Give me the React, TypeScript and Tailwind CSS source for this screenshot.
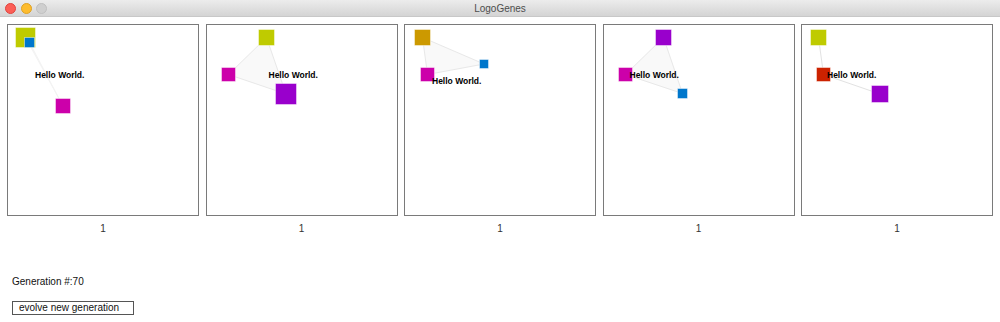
type Node = { x: number; y: number; s: number; c: string };

type Logo = {
  nodes: Node[];
  shape: 'polygon' | 'polyline';
  edge: string;
  text: { x: number; y: number };
};

// colours of the genes
const YELLOW = '#bfcb00';
const BLUE = '#0077cc';
const MAGENTA = '#cc00aa';
const PURPLE = '#9900cc';
const GOLD = '#cc9900';
const RED = '#cc2200';

// positions are measured from the outer corner of each panel
const logos: Logo[] = [
  {
    nodes: [
      { x: 8, y: 3, s: 21, c: YELLOW },
      { x: 17, y: 13, s: 11, c: BLUE },
      { x: 48, y: 74, s: 16, c: MAGENTA },
    ],
    shape: 'polygon',
    edge: '#f3f3f3',
    text: { x: 28, y: 51 },
  },
  {
    nodes: [
      { x: 52, y: 5, s: 17, c: YELLOW },
      { x: 15, y: 43, s: 15, c: MAGENTA },
      { x: 69, y: 59, s: 22, c: PURPLE },
    ],
    shape: 'polygon',
    edge: '#e8e8e8',
    text: { x: 63, y: 51 },
  },
  {
    nodes: [
      { x: 10, y: 5, s: 17, c: GOLD },
      { x: 75, y: 35, s: 10, c: BLUE },
      { x: 16, y: 43, s: 15, c: MAGENTA },
    ],
    shape: 'polygon',
    edge: '#e8e8e8',
    text: { x: 28, y: 57 },
  },
  {
    nodes: [
      { x: 52, y: 5, s: 17, c: PURPLE },
      { x: 15, y: 43, s: 15, c: MAGENTA },
      { x: 74, y: 64, s: 11, c: BLUE },
    ],
    shape: 'polygon',
    edge: '#e8e8e8',
    text: { x: 27, y: 51 },
  },
  {
    nodes: [
      { x: 9, y: 5, s: 17, c: YELLOW },
      { x: 15, y: 43, s: 15, c: RED },
      { x: 70, y: 61, s: 18, c: PURPLE },
    ],
    shape: 'polyline',
    edge: '#e2e2e2',
    text: { x: 26, y: 51 },
  },
];

function LogoPanel({ logo }: { logo: Logo }) {
  const points = logo.nodes.map((n) => `${n.x + n.s / 2},${n.y + n.s / 2}`).join(' ');
  return (
    <div className="relative w-[192px] h-[192px] border border-[#7a7a7a] bg-white overflow-hidden">
      <svg className="absolute -left-px -top-px" width={192} height={192}>
        {logo.shape === 'polygon' ? (
          <polygon points={points} fill="#f9f9f9" stroke={logo.edge} strokeWidth={1} />
        ) : (
          <polyline points={points} fill="none" stroke={logo.edge} strokeWidth={1} />
        )}
        {logo.nodes.map((n, i) => (
          <rect
            key={i}
            x={n.x + 0.5}
            y={n.y + 0.5}
            width={n.s - 1}
            height={n.s - 1}
            fill={n.c}
            stroke="rgba(255,255,255,0.45)"
            strokeWidth={1}
          />
        ))}
      </svg>
      <span
        className="absolute whitespace-nowrap text-[8.5px] leading-[10px] font-bold text-black"
        style={{ left: logo.text.x - 1, top: logo.text.y - 6 }}
      >
        Hello World.
      </span>
    </div>
  );
}

function TitleBar() {
  return (
    <div className="grid grid-cols-[1fr_auto_1fr] items-center h-[17px] bg-gradient-to-b from-[#ececec] to-[#d4d4d4] border-b border-[#c8c8c8]">
      <div className="flex items-center gap-[4.5px] pl-[5px]">
        <span className="w-[11px] h-[11px] rounded-full bg-[#fc5f57] border border-[#e0443e]" />
        <span className="w-[11px] h-[11px] rounded-full bg-[#fdbc2e] border border-[#dea123]" />
        <span className="w-[11px] h-[11px] rounded-full bg-[#cfcfcf] border border-[#c0c0c0]" />
      </div>
      <div className="text-[10px] leading-[12px] text-[#4d4d4d] pt-[1px]">LogoGenes</div>
      <div />
    </div>
  );
}

export default function App() {
  return (
    <div className="w-[1000px] h-[322px] bg-white overflow-hidden font-['Liberation_Sans',Arial,sans-serif]">
      <TitleBar />
      <div className="flex gap-[6.5px] pl-[7px] pt-[7px]">
        {logos.map((logo, i) => (
          <div key={i} className="flex flex-col items-center">
            <LogoPanel logo={logo} />
            <div className="mt-[7px] text-[10px] leading-[12px] text-[#333]">1</div>
          </div>
        ))}
      </div>
      <div className="mt-[41px] pl-[12px] text-[10px] leading-[12px] text-[#111]">Generation #:70</div>
      <button className="ml-[12px] mt-[13px] w-[122px] h-[14px] border border-[#555] bg-white text-left pl-[6px] text-[10px] leading-[12px] text-[#111]">
        evolve new generation
      </button>
    </div>
  );
}
